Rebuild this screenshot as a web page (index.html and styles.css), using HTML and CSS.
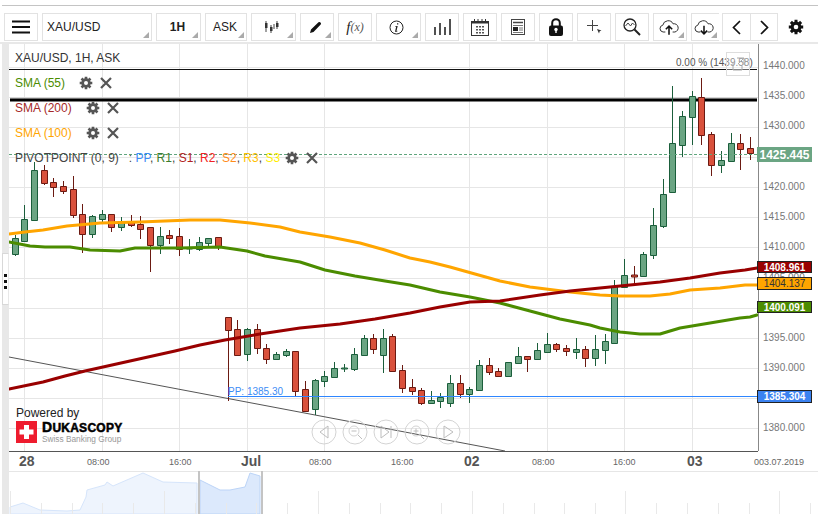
FILE: index.html
```html
<!DOCTYPE html>
<html lang="en">
<head>
<meta charset="utf-8">
<title>XAU/USD chart</title>
<link rel="stylesheet" href="styles.css">
</head>
<body>
<svg class="defs" width="0" height="0" aria-hidden="true">
  <symbol id="gear" viewBox="0 0 16 16">
    <path d="M8 .8V15.2M.8 8H15.2M2.9 2.9L13.1 13.1M13.1 2.9L2.9 13.1" stroke="currentColor" stroke-width="3" fill="none"/>
    <circle cx="8" cy="8" r="3.9" fill="none" stroke="currentColor" stroke-width="3"/>
    <circle cx="8" cy="8" r="2.3" fill="#fff"/>
  </symbol>
  <symbol id="cross" viewBox="0 0 12 12">
    <path d="M1 1L11 11M11 1L1 11" stroke="currentColor" stroke-width="2.2" fill="none"/>
  </symbol>
</svg>
<div class="app">
  <div class="topline"></div>
  <div class="toolbar">
    <div class="btn w34">
      <svg width="18" height="14" viewBox="0 0 18 14"><path d="M0 1.5H18M0 7H18M0 12.500H18" stroke="#111" stroke-width="2"/></svg>
    </div>
    <div class="btn symbol corner">XAU/USD</div>
    <div class="btn w45 period corner">1H</div>
    <div class="btn ask corner">ASK</div>
    <div class="btn w45 corner">
      <svg class="shift" width="15" height="12" viewBox="0 0 15 12"><path d="M2 0V11M7 4V12M13 0V8M10 3V8" stroke="#444" stroke-width="1"/><path d="M1 2H3.500V7H1zM6 6H8.500V10H6zM12 2H14.500V6H12z" fill="#333"/></svg>
    </div>
    <div class="btn w34 corner">
      <svg class="shift" width="13" height="13" viewBox="0 0 13 13"><path d="M1 12L2 8.500L9.500 1.200Q10.300.6 11.200 1.300L11.800 2Q12.400 2.900 11.700 3.600L4.500 11z" fill="#111"/></svg>
    </div>
    <div class="btn w34 fx"><i>f</i><span class="fxarg">(x)</span></div>
    <div class="btn info corner">
      <svg class="shift" width="15" height="15" viewBox="0 0 15 15"><circle cx="7.500" cy="7.500" r="6.500" fill="none" stroke="#222" stroke-width="1"/><path d="M8 3.200h1.300v1.400H8zM7.700 6L6.200 6.400v.5h.9L6.100 11.200Q6 12 7 11.900L8.500 11.200V10.800L7.500 11L8.700 6z" fill="#222"/></svg>
    </div>
    <div class="btn w34">
      <svg width="17" height="16" viewBox="0 0 17 16"><path d="M1 8V16M6 4V16M11 8V16M16 0V16" stroke="#333" stroke-width="1.700"/></svg>
    </div>
    <div class="btn w34">
      <svg width="18" height="17" viewBox="0 0 18 17"><rect x=".5" y="2.500" width="17" height="14" fill="#fff" stroke="#333"/><path d="M0 3.500H18" stroke="#333" stroke-width="2"/><path d="M3.500 0V3M7 0V3M11 0V3M14.500 0V3" stroke="#333"/><path d="M5 7h2v1.500H5zM8 7h2v1.500H8zM11 7h2v1.500H11zM5 10h2v1.500H5zM8 10h2v1.500H8zM11 10h2v1.500H11zM5 13h2v1.500H5zM8 13h2v1.500H8zM11 13h2v1.500H11z" fill="#555"/></svg>
    </div>
    <div class="btn w34">
      <svg width="14" height="16" viewBox="0 0 14 16"><rect x=".5" y=".5" width="13" height="15" fill="#fff" stroke="#444"/><path d="M2 3.500H12" stroke="#444" stroke-width="1.500"/><path d="M2 6.500H12M8 9H12M8 11H12M2 13.500H12" stroke="#777"/><rect x="2" y="8" width="5" height="4" fill="#222"/></svg>
    </div>
    <div class="btn w34">
      <svg width="14" height="18" viewBox="0 0 14 18"><path d="M3.200 8V5A3.800 3.800 0 0 1 10.800 5V8" fill="none" stroke="#111" stroke-width="2"/><rect y="7.500" width="14" height="10.500" rx="2" fill="#111"/><circle cx="7" cy="11.500" r="1.700" fill="#fff"/><rect x="6.300" y="12" width="1.400" height="3" fill="#fff"/></svg>
    </div>
    <div class="btn w34">
      <svg width="15" height="15" viewBox="0 0 15 15"><path d="M5.500 0V11M0 5.500H11" stroke="#444" stroke-width="1"/><path d="M10 9L14.500 10.500L12.700 11.300L12 13.500z" fill="#333"/></svg>
    </div>
    <div class="btn w34">
      <svg width="18" height="18" viewBox="0 0 18 18"><circle cx="7" cy="7" r="6" fill="none" stroke="#222" stroke-width="1.300"/><path d="M2.500 8L5 5L7.500 8L9.500 5L11.500 7" fill="none" stroke="#444"/><path d="M11.500 11.500L17 17" stroke="#222" stroke-width="2"/></svg>
    </div>
    <div class="btn upload corner">
      <svg class="shift2" width="20" height="16" viewBox="0 0 22 17"><path d="M7 14H4.500A3.800 3.800 0 0 1 4.200 6.500A6 6 0 0 1 15.500 5A4.600 4.600 0 0 1 17.500 14H15" fill="none" stroke="#333" stroke-width="1.100"/><path d="M11 17V8M7.500 11L11 7.500L14.500 11" fill="none" stroke="#111" stroke-width="1.700"/></svg>
    </div>
    <div class="btn download corner">
      <svg class="shift2" width="20" height="16" viewBox="0 0 22 17"><path d="M7 14H4.500A3.800 3.800 0 0 1 4.200 6.500A6 6 0 0 1 15.500 5A4.600 4.600 0 0 1 17.500 14H15" fill="none" stroke="#333" stroke-width="1.100"/><path d="M11 7V16M7.500 12.500L11 16L14.500 12.500" fill="none" stroke="#111" stroke-width="1.700"/></svg>
    </div>
    <div class="pager">
      <div class="page"><svg width="9" height="15" viewBox="0 0 9 15"><path d="M8 1L1.500 7.500L8 14" fill="none" stroke="#111" stroke-width="1.700"/></svg></div>
      <div class="page next"><svg width="9" height="15" viewBox="0 0 9 15"><path d="M1 1L7.500 7.500L1 14" fill="none" stroke="#111" stroke-width="1.700"/></svg></div>
    </div>
    <svg class="settings" width="16" height="16"><use href="#gear"/></svg>
  </div>
  <div class="workspace">
    <div class="strip">
      <div class="grip"><span class="dot"></span><span class="dot"></span><span class="dot"></span></div>
    </div>
    <div class="chart">
      <svg class="plot" width="809" height="470" viewBox="9 44 809 470">
        <path class="grid" d="M24.500 44V451M102.500 44V451M179.500 44V451M247.500 44V451M324.500 44V451M469.500 44V451M547.500 44V451M624.500 44V451M692.500 44V451M9 67.500H758M9 97.500H758M9 127.500H758M9 157.500H758M9 187.500H758M9 217.500H758M9 247.500H758M9 278.500H758M9 308.500H758M9 338.500H758M9 368.500H758M9 398.500H758M9 428.500H758"/>
        <path class="grey-shadow" d="M10 98H757"/>
        <path class="ray" d="M9 357L505 451"/>
        <path class="level-thin" d="M9 69.500H757"/>
        <path class="level-thick" d="M10 100H757"/>

        <path class="wick-up" d="M15.500 235V256M24.500 205V242M34.500 162V220M92.500 215V238M102.500 210V222M121.500 217V231M160.500 227V254M189.500 239V254M199.500 237V251M208.500 238V247M247.500 328V361M276.500 352V360M286.500 349V357M315.500 379V415M324.500 371V387M334.500 362V377M344.500 364V372M354.500 348V371M364.500 335V355M383.500 329V373M431.500 391V404M440.500 393V408M450.500 375V407M469.500 387V403M479.500 360V391M508.500 362V377M518.500 347V364M537.500 343V359M547.500 333V353M576.500 338V359M595.500 335V366M605.500 334V364M614.500 280V344M624.500 259V287M643.500 252V276M653.500 208V259M663.500 179V228M672.500 86V193M682.500 111V157M692.500 91V145M721.500 151V173M731.500 133V162"/>
        <path class="wick-down" d="M44.500 165V185M53.500 178V197M63.500 181V194M73.500 176V218M82.500 204V253M111.500 214V232M131.500 215V227M140.500 216V239M150.500 227V272M169.500 230V244M179.500 228V256M218.500 237V250M228.500 317V401M237.500 320V356M257.500 324V354M266.500 344V364M295.500 351V396M305.500 381V412M373.500 334V354M392.500 334V372M402.500 365V393M412.500 379V395M421.500 388V405M460.500 375V398M489.500 358V375M498.500 368V376M527.500 356V372M556.500 343V352M566.500 345V356M585.500 346V367M634.500 266V286M701.500 78V145M711.500 132V176M740.500 134V170M750.500 137V160"/>
        <path class="body-up" d="M12.500 238.500h6v16h-6zM21.500 219.500h6v22h-6zM31.500 170.500h6v50h-6zM89.500 216.500h6v18h-6zM99.500 214.500h6v5h-6zM118.500 221.500h6v6h-6zM157.500 236.500h6v9h-6zM186.500 248h6v1h-6zM196.500 242.500h6v7h-6zM205.500 238.500h6v5h-6zM244.500 329.500h6v25h-6zM273.500 354.500h6v5h-6zM283.500 351.500h6v4h-6zM312.500 380.500h6v29h-6zM321.500 376.500h6v5h-6zM331.500 368.500h6v9h-6zM341.500 368h6v1h-6zM351.500 354.500h6v15h-6zM361.500 338.500h6v17h-6zM380.500 338.500h6v17h-6zM428.500 400.500h6v3h-6zM437.500 397.500h6v4h-6zM447.500 383.500h6v20h-6zM466.500 389.500h6v5h-6zM476.500 365.500h6v25h-6zM505.500 362.500h6v14h-6zM515.500 356.500h6v7h-6zM534.500 350.500h6v9h-6zM544.500 344.500h6v8h-6zM573.500 349.500h6v3h-6zM592.500 349.500h6v9h-6zM602.500 341.500h6v9h-6zM611.500 286.500h6v57h-6zM621.500 275.500h6v12h-6zM640.500 254.500h6v22h-6zM650.500 225.500h6v30h-6zM660.500 194.500h6v32h-6zM669.500 143.500h6v49h-6zM679.500 116.500h6v29h-6zM689.500 96.500h6v21h-6zM718.500 160.500h6v5h-6zM728.500 143.500h6v18h-6z"/>
        <path class="body-down" d="M41.500 170.500h6v13h-6zM50.500 182.500h6v5h-6zM60.500 186.500h6v5h-6zM70.500 189.500h6v26h-6zM79.500 214.500h6v20h-6zM108.500 214.500h6v13h-6zM128.500 221.500h6v4h-6zM137.500 224.500h6v5h-6zM147.500 227.500h6v18h-6zM166.500 235.500h6v3h-6zM176.500 236.500h6v13h-6zM215.500 237.500h6v9h-6zM225.500 317.500h6v13h-6zM234.500 329.500h6v26h-6zM254.500 329.500h6v19h-6zM263.500 348.500h6v11h-6zM292.500 351.500h6v40h-6zM302.500 389.500h6v22h-6zM370.500 338.500h6v11h-6zM389.500 336.500h6v35h-6zM399.500 370.500h6v18h-6zM409.500 387.500h6v4h-6zM418.500 390.500h6v13h-6zM457.500 383.500h6v11h-6zM486.500 365.500h6v7h-6zM495.500 371.500h6v5h-6zM524.500 356.500h6v3h-6zM553.500 344.500h6v5h-6zM563.500 348.500h6v3h-6zM582.500 349.500h6v9h-6zM631.500 275h6v2h-6zM698.500 97.500h6v38h-6zM708.500 134.500h6v31h-6zM737.500 143.500h6v6h-6zM747.500 148.500h6v5h-6z"/>

        <path class="last-price" d="M9 154.500H757"/>
        <path class="pivot" d="M228 396.500H757"/>

        <polyline class="ma ma-orange" points="9,234 25,232 43,230 67,226 100,223 140,222 165,221 190,220 220,220 250,223 280,227 300,232 330,237 360,243 385,250 410,258 430,262 450,267 475,274 500,281 530,287 570,292 600,295 620,296 650,296 670,294 690,290 720,288 745,285 757,285"/>
        <polyline class="ma ma-green" points="9,242 30,246 45,247 70,247 90,250 120,251 135,248 180,248 220,247 247,251 265,256 300,262 325,270 355,276 385,281 410,285 440,292 470,297 500,303 530,311 560,319 590,325 600,328 620,332 640,334 660,334 680,328 710,323 740,318 750,317 757,315"/>
        <polyline class="ma ma-red" points="9,389 43,382 65,376 85,371 130,361 175,351 200,345 225,340 260,334 300,328 340,324 375,319 410,313 440,307 470,302 500,301 540,295 570,291 600,288 630,285 660,282 690,278 720,273 745,270 757,268"/>

        <path class="axis-bottom" d="M9 451.500H758"/>
        <path class="axis-right" d="M758.500 44V451"/>
        <path class="sep" d="M9 471.500H818"/>

        <g class="price-labels">
          <text x="763" y="69">1440.000</text><text x="763" y="99">1435.000</text><text x="763" y="129">1430.000</text><text x="763" y="190">1420.000</text><text x="763" y="220">1415.000</text><text x="763" y="250">1410.000</text><text x="763" y="281">1405.000</text><text x="763" y="341">1395.000</text><text x="763" y="371">1390.000</text><text x="763" y="431">1380.000</text>
        </g>
        <g class="time-labels">
          <text x="87" y="465">08:00</text><text x="169" y="465">16:00</text><text x="309" y="465">08:00</text><text x="391" y="465">16:00</text><text x="532" y="465">08:00</text><text x="613" y="465">16:00</text><text x="754" y="465">003.07.2019</text>
        </g>
        <g class="day-labels">
          <text x="19" y="466">28</text><text x="241" y="466">Jul</text><text x="464" y="466">02</text><text x="687" y="466">03</text>
        </g>

        <path class="nav-area" d="M10 514V507L23 503L40 510L67 511L80 510L86 497L87 490L105 485L107 482L113 486L143 473L163 482L197 483V514z"/>
        <path class="nav-selected" d="M200 514V480L220 490L230 490L245 487L250 473L260 476V514z"/>
        <path class="nav-ticks" d="M10.500 491V514M164.500 491V514M318.500 491V514M472.500 491V514M625.500 491V514M779.500 491V514M41.500 503V514M72.500 503V514M102.500 503V514M133.500 503V514M195.500 503V514M226.500 503V514M256.500 503V514M287.500 503V514M349.500 503V514M380.500 503V514M410.500 503V514M441.500 503V514M503.500 503V514M534.500 503V514M564.500 503V514M595.500 503V514M656.500 503V514M687.500 503V514M718.500 503V514M749.500 503V514M810.500 503V514"/>
        <path class="nav-handle" d="M199 471V514M262 471V514"/>

        <g class="player">
          <circle cx="324" cy="432" r="12"/><path d="M328 426V438L320 432z"/>
          <circle cx="355" cy="432" r="12"/><circle cx="354" cy="431" r="5"/><path d="M351.500 431H356.500M358 435L362 439"/>
          <circle cx="386" cy="432" r="12"/><path d="M381 426V438L389 432zM391 426V438"/>
          <circle cx="417" cy="432" r="12"/><circle cx="416" cy="431" r="5"/><path d="M413.500 431H418.500M416 428.500V433.500M420 435L424 439"/>
          <circle cx="448" cy="432" r="12"/><path d="M444 426V438L453 432z"/>
        </g>
      </svg>

      <div class="legend">
        <div class="row title">XAU/USD, 1H, ASK</div>
        <div class="row sma55">SMA (55)
          <svg class="ico-gear"><use href="#gear"/></svg><svg class="ico-x"><use href="#cross"/></svg></div>
        <div class="row sma200">SMA (200)
          <svg class="ico-gear"><use href="#gear"/></svg><svg class="ico-x"><use href="#cross"/></svg></div>
        <div class="row sma100">SMA (100)
          <svg class="ico-gear"><use href="#gear"/></svg><svg class="ico-x"><use href="#cross"/></svg></div>
        <div class="row pivotrow"><span>PIVOTPOINT (0, 9) &nbsp;&nbsp;: <b class="pp">PP</b>, <b class="r1">R1</b>, <b class="s1">S1</b>, <b class="r2">R2</b>, <b class="s2">S2</b>, <b class="r3">R3</b>, <b class="s3">S3</b></span><svg class="ico-gear tight"><use href="#gear"/></svg><svg class="ico-x"><use href="#cross"/></svg></div>
      </div>

      <div class="pct">0.00 % (1439.58)</div>
      <div class="popout">
        <svg width="16" height="16" viewBox="0 0 16 16"><path d="M3 6V14H12V10M7 2H14V9M14 2L8 8" fill="none" stroke="#aaa"/></svg>
      </div>
      <div class="pp-note">PP: 1385.30</div>

      <div class="tag tag-last">1425.445</div>
      <div class="tag tag-red">1408.961</div>
      <div class="tag tag-orange">1404.137</div>
      <div class="tag tag-green">1400.091</div>
      <div class="tag tag-blue">1385.304</div>

      <div class="brand">
        <div class="powered">Powered by</div>
        <div class="brand-row">
          <svg width="21" height="22" viewBox="0 0 21 22"><rect width="21" height="22" fill="#ee1c2e"/><path d="M8 4H13V8.500H17.500V13.500H13V18H8V13.500H3.500V8.500H8z" fill="#fff"/></svg>
          <div class="brand-text">
            <div class="duka"><span class="duka-d">D</span>UKASCOPY</div>
            <div class="swiss">Swiss Banking Group</div>
          </div>
        </div>
      </div>
    </div>
  </div>
</div>
</body>
</html>
```
FILE: styles.css
```css
* { box-sizing: border-box; }
html, body { margin: 0; padding: 0; background: #fff; }
body { width: 818px; height: 514px; overflow: hidden; font-family: "Liberation Sans", Arial, sans-serif; }
.defs { position: absolute; }
.app { display: flex; flex-direction: column; height: 514px; }
.topline { height: 1px; margin: 5px 0 0 2px; background: #c4c4c4; flex: none; }
.toolbar { display: flex; align-items: flex-start; gap: 4px; height: 38px; padding: 7px 0 0 4px; border-bottom: 2px solid #e8e8e8; flex: none; }
.btn { position: relative; height: 28px; border: 1px solid #e2e2e2; background: #fff; display: flex; align-items: center; justify-content: center; font-size: 12px; color: #222; flex: none; }
.corner::after { content: ""; position: absolute; right: 2px; bottom: 2px; width: 0; height: 0; border-style: solid; border-width: 0 0 6px 6px; border-color: transparent transparent #aaa transparent; }
.w34 { width: 34px; }
.w45 { width: 45px; }
.symbol { width: 110px; justify-content: flex-start; padding-left: 4px; }
.period { font-weight: 700; padding-right: 2px; }
.ask { width: 42px; padding-right: 2px; }
.info { width: 45px; padding-right: 0; }
.shift { margin-right: 4px; }
.shift2 { margin-right: 3px; }
.upload { width: 34px; }
.download { width: 28px; margin-right: -1px; border-right: none; }
.fx { font-family: "Liberation Serif", serif; font-size: 14px; color: #222; }
.fx i { font-size: 15px; }
.fxarg { font-style: italic; font-size: 12px; color: #555; }
.pager { display: flex; height: 28px; flex: none; border: 1px solid #e2e2e2; background: #fff; position: relative; }
.page { width: 27px; display: flex; align-items: center; justify-content: center; }
.next { border-left: 1px solid #e2e2e2; }
.settings { color: #111; margin: 6px 0 0 6px; flex: none; }
.workspace { display: flex; flex: 1; min-height: 0; padding-left: 2px; }
.strip { width: 7px; background: #e8e8e8; flex: none; padding-top: 209px; }
.grip { height: 52px; background: #fff; border: 1px solid #d8d8d8; border-right-color: #e8e8e8; display: flex; flex-direction: column; align-items: center; gap: 3px; padding-top: 20px; }
.dot { width: 3px; height: 3px; background: #111; flex: none; }
.chart { position: relative; flex: 1; overflow: hidden; }
.plot { display: block; }
.grid { stroke: #e6e6e6; stroke-width: 1; fill: none; }
.grey-shadow { stroke: #c8c8c8; stroke-width: 1; }
.ray { stroke: #555; stroke-width: 1; fill: none; }
.level-thin { stroke: #111; stroke-width: 1; }
.level-thick { stroke: #000; stroke-width: 3; }
.last-price { stroke: #5fa57c; stroke-width: 1; stroke-dasharray: 3 2; fill: none; }
.pivot { stroke: #2f86ff; stroke-width: 1; fill: none; }
.wick-up { stroke: #1b5e3b; stroke-width: 1; fill: none; }
.wick-down { stroke: #6b1a12; stroke-width: 1; fill: none; }
.body-up { fill: #6ba583; stroke: #1b5e3b; stroke-width: 1; }
.body-down { fill: #d9513c; stroke: #6b1a12; stroke-width: 1; }
.ma { fill: none; stroke-linejoin: round; stroke-linecap: round; }
.ma-orange { stroke: #ffa500; stroke-width: 3; }
.ma-green { stroke: #4b8c00; stroke-width: 3; }
.ma-red { stroke: #990000; stroke-width: 3; }
.axis-bottom { stroke: #555; stroke-width: 1; }
.axis-right { stroke: #888; stroke-width: 1; }
.sep { stroke: #e6e6e6; stroke-width: 1; }
.price-labels text { font-size: 10px; fill: #777; font-family: "Liberation Sans", Arial, sans-serif; }
.time-labels text { font-size: 9px; fill: #666; font-family: "Liberation Sans", Arial, sans-serif; }
.day-labels text { font-size: 14px; font-weight: 700; fill: #555; font-family: "Liberation Sans", Arial, sans-serif; }
.nav-area { fill: #eef4fd; stroke: #d6e5fb; stroke-width: 1; }
.nav-selected { fill: #dce9fc; stroke: #bcd4f7; stroke-width: 1; }
.nav-ticks { stroke: #e9e9e9; stroke-width: 1; }
.nav-handle { stroke: #c4c4c4; stroke-width: 2; }
.player circle, .player path { fill: none; stroke: #d4d4d4; stroke-width: 1; }
.player path { stroke: #bdbdbd; }
.legend { position: absolute; left: 6px; top: 1px; display: flex; flex-direction: column; font-size: 12px; }
.row { height: 25px; display: flex; align-items: center; white-space: nowrap; }
.title { color: #333; }
.sma55 { color: #4b8c00; }
.sma200 { color: #a52a2a; }
.sma100 { color: #ffa500; }
.pivotrow { color: #444; }
.pivotrow b { font-weight: 400; }
.pp { color: #3b8cf5; }
.r1 { color: #3a7d2c; }
.s1 { color: #b22222; }
.r2 { color: #f22222; }
.s2 { color: #ff8c1a; }
.r3 { color: #ffc000; }
.s3 { color: #ffee00; }
.ico-gear { width: 14px; height: 14px; color: #555; margin-left: 14px; flex: none; }
.ico-gear.tight { margin-left: 5px; }
.ico-x { width: 12px; height: 12px; color: #555; margin-left: 7px; flex: none; }
.pct { position: absolute; left: 667px; top: 13px; font-size: 10px; color: #555; white-space: nowrap; }
.popout { position: absolute; left: 717px; top: 8px; width: 24px; height: 24px; border: 1px solid #ddd; display: flex; align-items: center; justify-content: center; background: rgba(255,255,255,.35); }
.pp-note { position: absolute; left: 219px; top: 342px; font-size: 10px; color: #3b8cf5; white-space: nowrap; }
.tag { position: absolute; left: 748px; width: 55px; display: flex; align-items: center; justify-content: center; font-weight: 700; color: #fff; white-space: nowrap; }
.tag-last { top: 103px; height: 15px; background: #6ba583; font-size: 12px; }
.tag-red { top: 217px; height: 12px; background: #990000; border: 1px solid #222; font-size: 10px; }
.tag-orange { top: 233px; height: 13px; background: #ffa500; border: 1px solid #222; font-size: 10px; color: #333; font-weight: 400; }
.tag-green { top: 257px; height: 12px; background: #4b8c00; border: 1px solid #222; font-size: 10px; }
.tag-blue { top: 346px; height: 13px; background: #3b82f0; border: 1px solid #222; font-size: 10px; }
.brand { position: absolute; left: 7px; top: 363px; display: flex; flex-direction: column; gap: 1px; }
.powered { font-size: 12px; color: #222; line-height: 13px; }
.brand-row { display: flex; gap: 5px; }
.brand-text { display: flex; flex-direction: column; }
.duka { font-size: 12px; font-weight: 700; color: #000; line-height: 12px; height: 13px; -webkit-text-stroke: .5px #000; letter-spacing: .25px; }
.duka-d { font-size: 14px; line-height: 12px; }
.swiss { font-size: 8.300px; color: #999; line-height: 10px; }
```
